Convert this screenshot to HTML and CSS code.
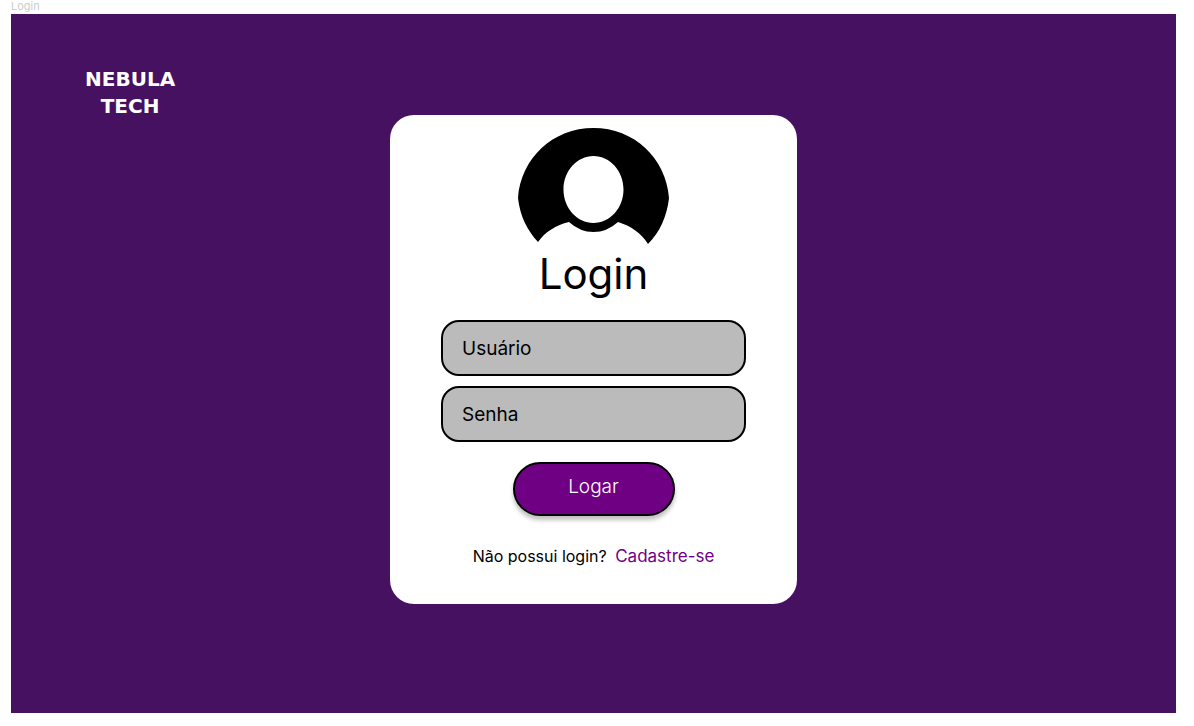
FILE: index.html
```html
<!DOCTYPE html>
<html lang="pt-BR">
<head>
  <meta charset="utf-8">
  <meta name="viewport" content="width=device-width, initial-scale=1">
  <title>Login</title>
  <link rel="stylesheet" href="styles.css">
</head>
<body>
  <p class="frame-label">Login</p>
  <div class="screen">
    <header class="brand">NEBULA<br>TECH</header>
    <main class="card">
      <svg class="avatar" viewBox="0 0 151 116" aria-hidden="true">
        <path fill-rule="evenodd" d="M0 70C3 30 35 0 75.500 0S148 30 151 70C149 88 142 104 130 116C123 105 113 98 100 94Q89 104 75.500 104T51 94C38 97 27 104 20 114C9 102 2 88 0 70ZM75.500 28C59 28 45.500 43 45.500 61.500S59 95 75.500 95S105.500 80 105.500 61.500S92 28 75.500 28Z"/>
      </svg>
      <h1 class="title">Login</h1>
      <form class="form">
        <input class="field" type="text" name="usuario" placeholder="Usuário" aria-label="Usuário">
        <input class="field" type="password" name="senha" placeholder="Senha" aria-label="Senha">
        <button class="submit" type="submit">Logar</button>
      </form>
      <p class="signup">Não possui login? <a class="signup-link" href="#cadastro">Cadastre-se</a></p>
    </main>
  </div>
</body>
</html>
```

FILE: styles.css
```css
* {
  box-sizing: border-box;
}

body {
  display: flex;
  flex-direction: column;
  min-height: 100vh;
  margin: 0;
  padding: 0 18px 13px 11px;
  background: #fff;
  color: #000;
  font-family: Inter, "Liberation Sans", sans-serif;
}

.frame-label {
  margin: 0;
  padding-bottom: 2px;
  color: #ccc;
  font-size: 11px;
  line-height: 12px;
}

.screen {
  flex: 1;
  display: grid;
  grid-template-columns: 1fr minmax(auto, 407px) 1fr;
  align-items: start;
  background: #461161;
}

.brand {
  justify-self: start;
  margin: 52px 0 0 74px;
  color: #fff;
  font-family: "DejaVu Sans", sans-serif;
  font-size: 20px;
  font-weight: 700;
  line-height: 27px;
  text-align: center;
}

.card {
  display: flex;
  flex-direction: column;
  align-items: center;
  margin: 101px 0;
  padding: 13px 51px 36px;
  border-radius: 24px;
  background: #fff;
}

.avatar {
  width: 151px;
  height: 116px;
}

.title {
  margin: 4px 0 20px;
  font-size: 42px;
  font-weight: 400;
  line-height: 52px;
}

.form {
  display: flex;
  flex-direction: column;
  align-items: center;
  align-self: stretch;
}

.field {
  width: 100%;
  height: 56px;
  margin-bottom: 10px;
  padding: 0 19px;
  border: 2px solid #000;
  border-radius: 18px;
  background: #bbb;
  color: #000;
  font: 400 19px/24px Inter, "Liberation Sans", sans-serif;
}

.field::placeholder {
  color: #000;
  opacity: 1;
}

.submit {
  width: 162px;
  height: 54px;
  margin-top: 10px;
  padding: 0 0 4px;
  border: 2px solid #000;
  border-radius: 27px;
  background: #700083;
  box-shadow: 0 4px 4px rgba(0, 0, 0, 0.25);
  color: #fff;
  font: 300 19px/24px Inter, "Liberation Sans", sans-serif;
}

.signup {
  margin: 28px 0 0;
  font-size: 16px;
  line-height: 24px;
  white-space: nowrap;
}

.signup-link {
  margin-left: 4px;
  color: #700083;
  font-size: 17px;
  text-decoration: none;
}
```
